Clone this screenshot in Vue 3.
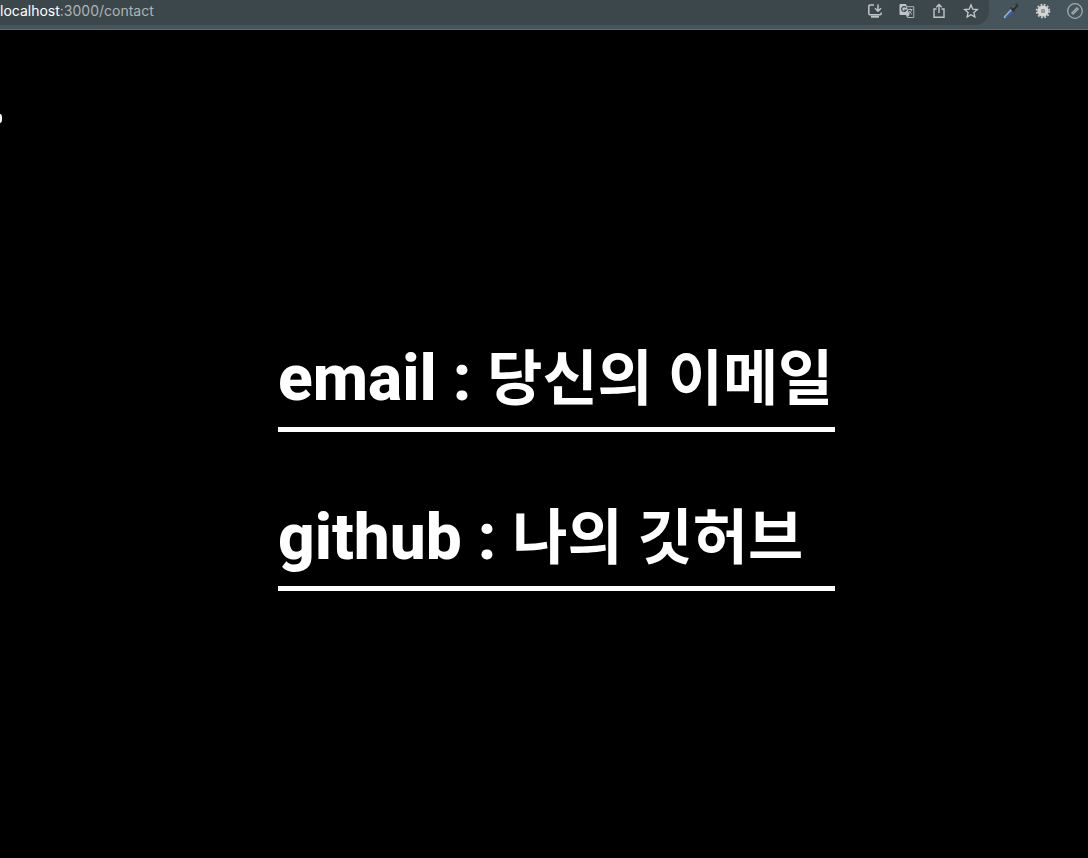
<script setup>
const contacts = [
  { label: 'email', value: '당신의 이메일' },
  { label: 'github', value: '나의 깃허브' },
]
</script>

<template>
  <div class="page">
    <header class="toolbar">
      <div class="omnibox">
        <div class="address"><span class="host">localhost</span>:3000/contact</div>
        <div class="actions">
          <button type="button" aria-label="Install app">
            <svg viewBox="0 0 16 16" fill="none" stroke="#bfc5c7" stroke-width="1.5">
              <path d="M7 2H3Q1.800 2 1.800 3.200V10.600Q1.800 11.800 3 11.800H13Q14.200 11.800 14.200 10.600V9.500" />
              <path d="M4 13.700H12" stroke-width="2" />
              <path d="M11 1.500V8M8 5.300L11 8.300L14 5.300" />
            </svg>
          </button>
          <button type="button" aria-label="Translate">
            <svg viewBox="0 0 16 16">
              <path d="M7 3.700H14.800V14.500H8.500L6.500 10" fill="none" stroke="#aeb5b8" />
              <path d="M1.500 1H7L10.500 12H1.500Q.500 12 .500 11V2Q.500 1 1.500 1Z" fill="#bfc5c7" />
              <path d="M7 4.600A2.400 2.400 0 1 0 7.300 7H5.200" fill="none" stroke="#3c474b" stroke-width="1.200" />
              <path d="M9 6.500H13.500M11.200 5.500V6.500M12.800 6.500Q12 9.500 9.800 11M10 8Q11 10.200 13 11.300" fill="none" stroke="#aeb5b8" />
              <path d="M8 12H10.500L8.500 14.300Z" fill="#bfc5c7" />
            </svg>
          </button>
          <button type="button" aria-label="Share">
            <svg viewBox="0 0 16 16" fill="none" stroke="#bfc5c7" stroke-width="1.400">
              <path d="M5.500 6H3V14.300H13V6H10.500M8 10V1.800M5.200 4.300L8 1.500L10.800 4.300" />
            </svg>
          </button>
          <button type="button" aria-label="Bookmark this page">
            <svg viewBox="0 0 16 16" fill="none" stroke="#c6ccce" stroke-width="1.300">
              <path d="M8 2L9.800 6.200L14.300 6.600L10.900 9.600L11.900 14L8 11.700L4.100 14L5.100 9.600L1.700 6.600L6.200 6.200Z" />
            </svg>
          </button>
        </div>
      </div>
      <div class="extensions">
        <button type="button" aria-label="Color picker">
          <svg viewBox="0 0 16 16" stroke-linecap="round">
            <path d="M2 14L9 6.500" stroke="#a5b7cc" stroke-width="2.400" />
            <path d="M3.500 14L9 8.500" stroke="#3060b8" stroke-width="2" />
            <path d="M8 5L11 8" stroke="#30363a" stroke-width="1.800" />
            <path d="M10 6L13.500 2.500" stroke="#2b3033" stroke-width="3.600" />
            <path d="M9.500 5L12.500 2" stroke="#7c858a" stroke-width="1" />
          </svg>
        </button>
        <button type="button" aria-label="Settings extension">
          <svg viewBox="0 0 16 16">
            <circle cx="8" cy="8" r="6.300" fill="none" stroke="#c9cac8" stroke-width="2" stroke-dasharray="1.800 1.498" />
            <circle cx="8" cy="8" r="3.800" fill="none" stroke="#d6d6d4" stroke-width="3.600" />
            <circle cx="8" cy="8" r="2" fill="#9ba09f" />
          </svg>
        </button>
        <button type="button" aria-label="Disabled extension">
          <svg viewBox="0 0 16 16" fill="none" stroke="#a3aaad">
            <circle cx="8" cy="8" r="7.300" stroke-width="1.300" />
            <path d="M5 11L11 5" stroke-width="3" />
            <path d="M5.500 10.500L10.500 5.500" stroke="#858e92" stroke-width="1" />
          </svg>
        </button>
      </div>
    </header>
    <main class="content">
      <span class="edge-dot"></span>
      <ul class="contacts">
        <li v-for="item in contacts" :key="item.label">{{ item.label }} : <span class="value">{{ item.value }}</span></li>
      </ul>
    </main>
  </div>
</template>

<style>
body {
  margin: 0;
  background: #000;
}
</style>

<style scoped>
.page {
  display: flex;
  flex-direction: column;
  min-height: 100vh;
  background: #000;
  color: #fff;
  font-family: Roboto, "Noto Sans CJK KR", sans-serif;
}
.toolbar {
  display: flex;
  box-sizing: border-box;
  height: 30px;
  background: #46555c;
  border-bottom: 1px solid #5d7078;
}
.omnibox {
  display: flex;
  flex: 1;
  align-items: center;
  justify-content: space-between;
  height: 25px;
  box-sizing: border-box;
  padding: 0 10px 3px 0;
  background: #3c474b;
  border-radius: 0 0 14px 0;
}
.address {
  font-family: Inter, sans-serif;
  font-size: 14px;
  line-height: 22px;
  color: #aeb4b6;
}
.host {
  color: #fff;
}
.actions,
.extensions {
  display: flex;
  align-items: center;
  gap: 16px;
}
.extensions {
  height: 22px;
  padding: 0 5px 0 14px;
}
button {
  display: block;
  width: 16px;
  height: 16px;
  padding: 0;
  border: 0;
  background: none;
}
svg {
  display: block;
  width: 16px;
  height: 16px;
}
.content {
  position: relative;
  display: flex;
  flex: 1;
  align-items: center;
  justify-content: center;
  padding: 37px 0 0 25px;
}
.edge-dot {
  position: absolute;
  top: 84px;
  left: 0;
  width: 2px;
  height: 9px;
  background: #fff;
  border-radius: 0 2px 2px 0 / 0 4px 4px 0;
}
.contacts {
  display: grid;
  gap: 61px;
  min-width: 557px;
  margin: 0;
  padding: 0;
  list-style: none;
}
.contacts li {
  padding-bottom: 3px;
  border-bottom: 5px solid #fff;
  font-size: 64px;
  font-weight: 800;
  line-height: 90px;
  white-space: nowrap;
}
.value {
  font-size: 60px;
  font-weight: 700;
  line-height: 60px;
}
</style>
